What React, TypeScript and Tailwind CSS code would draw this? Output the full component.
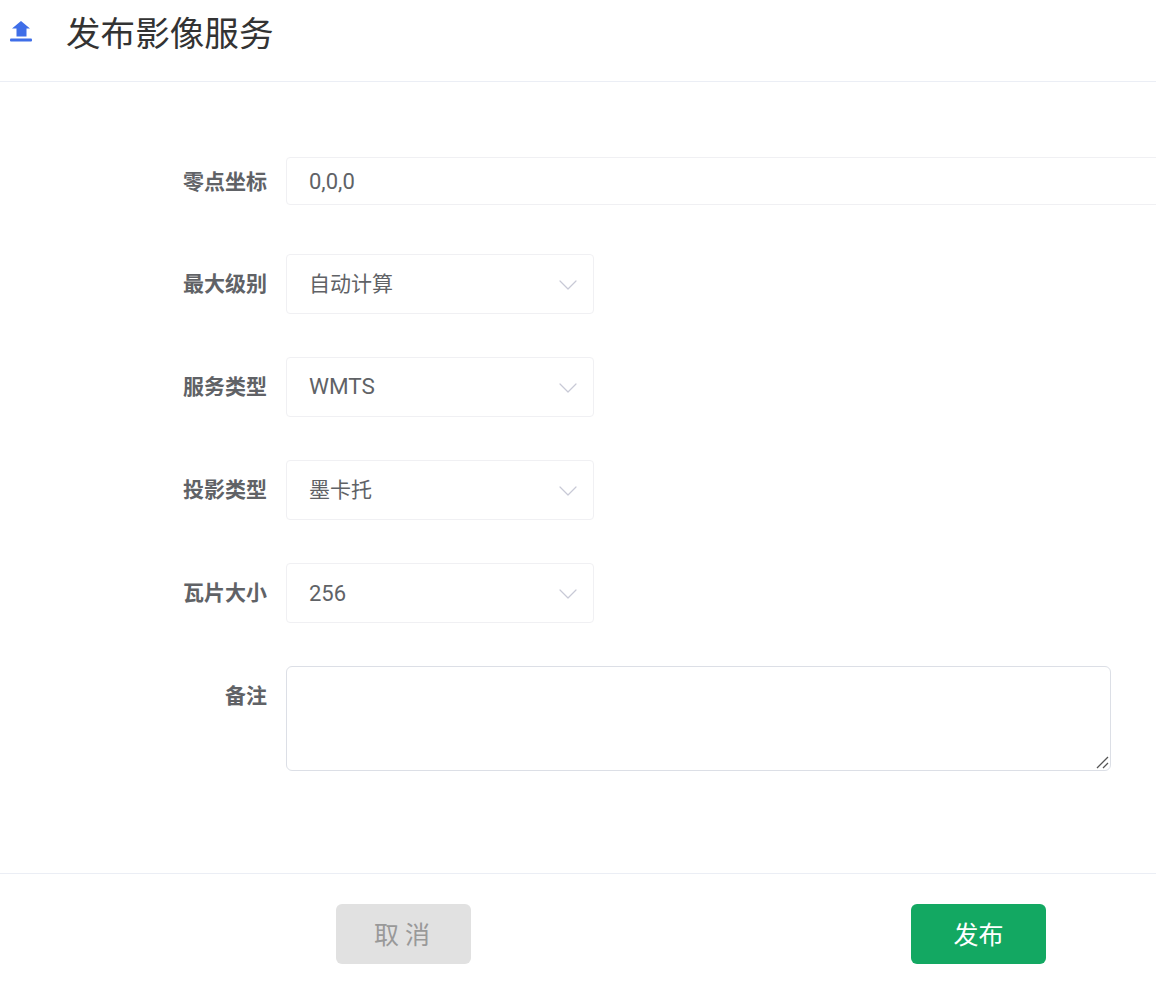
import { ChevronDown } from 'lucide-react';
import type { ReactNode } from 'react';

const selects = [
  { label: '最大级别', value: '自动计算', size: 'text-[21px] pt-[2px]' },
  { label: '服务类型', value: 'WMTS', size: 'text-[22.5px]' },
  { label: '投影类型', value: '墨卡托', size: 'text-[21px] pt-[2px]' },
  { label: '瓦片大小', value: '256', size: 'text-[22px]' },
];

function Row({ label, short, children }: { label: string; short?: boolean; children: ReactNode }) {
  return (
    <div className="flex">
      <label className={`w-[267px] shrink-0 text-right text-[21px] font-bold text-[#606266] ${short ? 'h-[48px] leading-[50px]' : 'leading-[60px]'}`}>
        {label}
      </label>
      <div className="ml-[19px] min-w-0 flex-1">{children}</div>
    </div>
  );
}

export default function App() {
  return (
    <div
      className="h-[996px] w-[1156px] overflow-hidden bg-white"
      style={{ fontFamily: 'Roboto, "Noto Sans CJK SC", sans-serif' }}
    >
      <header className="flex h-[82px] border-b border-[#ebeef5] pl-[10px]">
        <svg className="mt-[21px] h-[21px] w-[22px]" viewBox="0 0 22 21" fill="#3f6ee8">
          <path d="M11 0 L20 7.5 H16.5 V15.5 H6.5 V7.5 H2 Z" />
          <rect x="0" y="17.4" width="22" height="3" rx="1" />
        </svg>
        <h1 className="ml-[34px] mt-[9px] text-[34.6px] leading-[50px] font-normal text-[#333]">发布影像服务</h1>
      </header>

      <form className="flex h-[792px] flex-col border-b border-[#ebeef5] pt-[75px]">
        <Row label="零点坐标" short>
          <input
            defaultValue="0,0,0"
            className="h-[48px] w-[900px] rounded border border-[#f0f0f3] px-[22px] text-[22px] text-[#606266] outline-none"
          />
        </Row>

        <div className="mt-[49px] flex flex-col gap-[43px]">
          {selects.map((item) => (
            <Row key={item.label} label={item.label}>
              <div className="flex h-[60px] w-[308px] items-center justify-between rounded border border-[#f0f0f3] pr-[9px] pl-[22px] text-[#606266]">
                <span className={item.size}>{item.value}</span>
                <ChevronDown className="mt-[2px] h-[32px] w-[32px] text-[#c8c9d6]" strokeWidth={0.9} />
              </div>
            </Row>
          ))}

          <Row label="备注">
            <div className="relative w-[825px]">
              <textarea className="block h-[105px] w-full resize-none rounded-md border border-[#dcdfe6] px-[22px] py-2 text-[21px] text-[#606266] outline-none" />
              <svg className="absolute right-[2px] bottom-[2px] h-[13px] w-[13px]" viewBox="0 0 13 13" stroke="#555" strokeWidth="1.3" fill="none">
                <path d="M1 12 L12 1 M7 12 L12 7" />
              </svg>
            </div>
          </Row>
        </div>
      </form>

      <footer className="flex pt-[30px] pl-[336px]">
        <button className="h-[60px] w-[135px] rounded-md bg-[#e1e1e1] pt-[3px] pl-[3px] text-[25px] tracking-[6px] text-[#999]">取消</button>
        <button className="ml-[440px] h-[60px] w-[135px] rounded-md bg-[#13a862] pt-[3px] text-[25px] text-white">发布</button>
      </footer>
    </div>
  );
}
